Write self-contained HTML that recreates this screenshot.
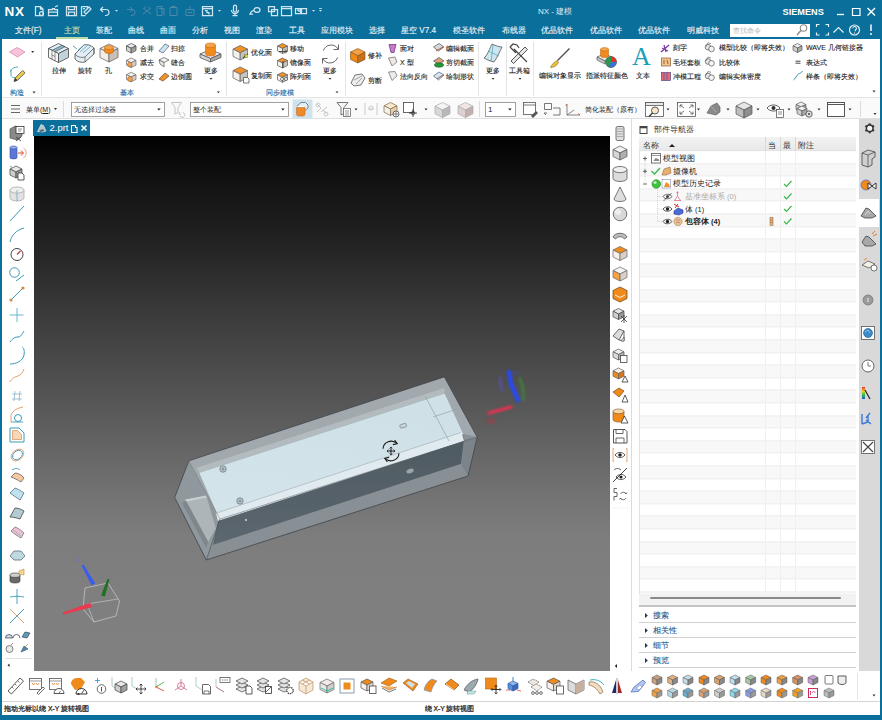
<!DOCTYPE html>
<html><head><meta charset="utf-8">
<style>
*{margin:0;padding:0;box-sizing:border-box}
html,body{width:882px;height:720px;overflow:hidden;background:#0b6f9c;font-family:"Liberation Sans",sans-serif;}
.a{position:absolute}
svg{overflow:visible}
#title{left:0;top:0;width:882px;height:39px;background:#0b6f9c;color:#fff}
.tab{position:absolute;top:24.8px;font-size:8.2px;color:#e6eef3;-webkit-text-stroke:0.15px currentColor;white-space:nowrap;line-height:12px}
#ribbon{left:2px;top:39px;width:878px;height:59px;background:#fff;border-bottom:1px solid #e3e3e3}
.rl{position:absolute;font-size:7px;color:#1c1c1c;-webkit-text-stroke:0.12px #1c1c1c;white-space:nowrap;line-height:9px}
.gl{position:absolute;font-size:7px;color:#2f6fa6;-webkit-text-stroke:0.15px #2f6fa6;white-space:nowrap;line-height:9px;top:88px}
.sep{position:absolute;width:1px;background:#e4e4e4}
#tbar{left:2px;top:98px;width:878px;height:21px;background:#fafafa;border-bottom:1px solid #e0e0e0}
#main{left:2px;top:119px;width:878px;height:552px;background:#fff}
#gfx{left:34px;top:136px;width:576px;height:535px;background:linear-gradient(#000 0%,#111 8%,#242424 21%,#3c3c3c 34%,#717171 66%,#7d7d7d 75%,#7f7f7f 85%,#808080 100%);overflow:hidden}
#gtab{left:33px;top:120px;width:57px;height:16px;background:#0b6f9c;color:#fff;font-size:10px}
#rcol{left:610px;top:119px;width:22px;height:552px;background:#fff;border-right:1px solid #dadada}
#nav{left:632px;top:119px;width:226px;height:552px;background:#fff}
#res{left:858.5px;top:119px;width:21px;height:552px;background:#d9d9d9}
#btbar{left:2px;top:671px;width:878px;height:30px;background:#fff}
#status{left:2px;top:701px;width:878px;height:14px;background:#fff;border-top:1px solid #d4d4d4;font-size:7.5px;color:#222}
</style></head><body>
<div id="title" class="a">
  <div class="a" style="left:4.5px;top:4px;font-size:13.5px;font-weight:bold;letter-spacing:0.8px;color:#fff">NX</div>
  <svg class="a" style="left:0;top:0" width="340" height="22" fill="none" stroke="#cde6f2" stroke-width="1.25">
    <!-- new -->
    <path d="M35.5 6.5h5l2.5 2.5v6.5h-7.5z M40.5 6.5v2.5h2.5"/><circle cx="41.5" cy="13.5" r="2"/>
    <!-- open -->
    <path d="M48.5 9.5h4v-1h2v1h3v6h-9z M48.5 12h9 M55 7l3-1.5"/>
    <!-- save -->
    <path d="M66.5 6.5h10v9h-10z M68.5 6.5v3h6v-3 M68.5 15.5v-3.5h6v3.5"/>
    <!-- save as -->
    <path d="M81.5 6.5h6v3 M81.5 6.5v9h4 M83 8.5h2 M84 12l5-5 2 2-5 5z"/>
    <!-- undo -->
    <path d="M101 9.5h5a3 3 0 0 1 0 6h-1 M103 7l-2.5 2.5 2.5 2.5" stroke-width="1.2"/>
    <path d="M115 10h3l-1.5 1.8z" fill="#cde4ee" stroke="none"/>
    <g stroke="#4d8aa8" stroke-width="1">
      <path d="M127 9.5h5a3 3 0 0 1 0 6h-1 M130 7l2.5 2.5-2.5 2.5"/>
      <path d="M143 8l8 6 M143 14l8-6 M145 6.5v2 M149 6.5v2"/>
      <path d="M157 6.5h5v9h-5z M159 8.5h5v7"/>
      <path d="M170 7.5h7v8h-7z M172 7.5v-1h3v1"/>
      <path d="M186 9.5h8v6h-8z M190 6v3 M188 12.5h4"/>
    </g>
    <path d="M202.5 6.5h10v9h-10z M202.5 8.5h10 M205 10.5h2v2h2v2" />
    <path d="M218 10h3l-1.5 1.8z" fill="#cde4ee" stroke="none"/>
    <!-- mic -->
    <path d="M233.5 6.5a1.5 1.5 0 0 1 3 0v4a1.5 1.5 0 0 1-3 0z M231.5 10a3.5 3.5 0 0 0 7 0 M235 13.5v2 M232.5 15.5h5"/>
    <!-- link -->
    <path d="M251 12l3-2 M254 10a2.5 2 0 0 1 6 0a2.5 2 0 0 1-6 0z M251 12l-1 2h3" />
    <!-- windows -->
    <path d="M268.5 6.5h6v5h-6z M271.5 9.5h6v6h-6z"/>
    <path d="M281.5 6.5h10v9h-10z M281.5 8.5h10"/>
    <path d="M295.5 8.5h5v5h-5z M301.5 8.5h5v5h-5z M297 10h2v2"/>
    <path d="M312 10h3l-1.5 1.8z M319 10h3l-1.5 1.8z" fill="#cde4ee" stroke="none"/>
    <path d="M319 8.5h3" stroke-width="0.8"/>
  </svg>
  <div class="a" style="left:538px;top:5.5px;font-size:8px;color:#e3ecf1;white-space:nowrap">NX - 建模</div>
  <div class="a" style="left:782.5px;top:6.8px;font-size:9.2px;font-weight:bold;letter-spacing:0px;color:#fff">SIEMENS</div>
  <svg class="a" style="left:830px;top:0" width="52" height="22" fill="none" stroke="#fff" stroke-width="1.3">
    <path d="M7 14.5h7"/>
    <path d="M22.5 8.5h7.5v7h-7.5z" stroke-width="1.2"/>
    <path d="M37.5 8l7.5 7.5 M45 8l-7.5 7.5" stroke-width="1.4"/>
  </svg>
  <div class="tab" style="left:15px">文件(F)</div>
  <div class="tab" style="left:64px;color:#c6e2a8">主页</div>
  <div class="a" style="left:56px;top:36.8px;width:32px;height:1.8px;background:#b4dca4"></div>
  <div class="tab" style="left:96px">装配</div>
  <div class="tab" style="left:128px">曲线</div>
  <div class="tab" style="left:160px">曲面</div>
  <div class="tab" style="left:192px">分析</div>
  <div class="tab" style="left:224px">视图</div>
  <div class="tab" style="left:256px">渲染</div>
  <div class="tab" style="left:289px">工具</div>
  <div class="tab" style="left:321px">应用模块</div>
  <div class="tab" style="left:369px">选择</div>
  <div class="tab" style="left:401px">星空 V7.4</div>
  <div class="tab" style="left:453px">模圣软件</div>
  <div class="tab" style="left:502px">布线器</div>
  <div class="tab" style="left:541px">优品软件</div>
  <div class="tab" style="left:590px">优品软件</div>
  <div class="tab" style="left:638px">优品软件</div>
  <div class="tab" style="left:687px">明威科技</div>
  <div class="a" style="left:730px;top:24px;width:80px;height:13px;background:#fff;"></div>
  <div class="a" style="left:733px;top:25.5px;font-size:7px;color:#b4b4b4;white-space:nowrap">查找命令</div>
  <svg class="a" style="left:730px;top:22px" width="152" height="17" fill="none">
    <circle cx="73.5" cy="6" r="3.2" stroke="#8a8a8a" stroke-width="1.1"/>
    <path d="M71 8.5l-4 4.5" stroke="#8a8a8a" stroke-width="1.4"/>
    <g stroke="#e9f2f6" stroke-width="1.2">
      <path d="M86.5 5v-2.5h3 M95.5 2.5h3v2.5 M98.5 10.5v2.5h-3 M89.5 13h-3v-2.5"/>
      <path d="M103.5 10.5l5-5 5 5"/>
      <circle cx="124.5" cy="8" r="5"/>
      <path d="M122.8 6.3a1.8 1.8 0 1 1 2.5 1.7v1.3 M124.5 10.5v1" stroke-width="1.1"/>
      <path d="M141 2.5v6.5 M141 11v2" stroke-width="1.6"/>
    </g>
  </svg>
</div>

<div id="ribbon" class="a"></div>
<svg class="a" style="left:0;top:0" width="882" height="100"><polygon points="9.5,52 17,47.5 25,52 17.5,57" fill="#f6c3d8" stroke="#d88aae" stroke-width="0.8" stroke-linejoin="round" /><path d="M31.2 51.1 h3 l-1.5 1.8 z" fill="#333"/><path d="M18 67c-4 0-7 2-7.5 4.5 M11 69.5v7 M12 77c2 1 5 1 6-1" fill="none" stroke="#3aa0b8" stroke-width="0.9"/><path d="M14 81.5l1.2-3.5 7.5-7.5 2.3 2.3-7.5 7.5z" fill="#f2d04a" stroke="#444" stroke-width="0.8"/><path d="M14 81.5l1.2-3.5 2.3 2.3z" fill="#333"/><path d="M32.5 91.6 h3 l-1.5 1.8 z" fill="#333"/><polygon points="48.5,48.5 58.5,43.5 68.5,48.5 58.5,53.5" fill="#dff0f6" stroke="#4a4a4a" stroke-width="0.8" stroke-linejoin="round" /><polygon points="48.5,48.5 58.5,53.5 58.5,62.5 48.5,57.5" fill="#f2f6f8" stroke="#4a4a4a" stroke-width="0.8" stroke-linejoin="round" /><polygon points="58.5,53.5 68.5,48.5 68.5,57.5 58.5,62.5" fill="#c2d3da" stroke="#4a4a4a" stroke-width="0.8" stroke-linejoin="round" /><polygon points="52,50.3 62,45.3 65,46.8 55,51.8" fill="#8fb4c4" stroke="#4a4a4a" stroke-width="0.6" stroke-linejoin="round" /><polygon points="52,50.3 55,51.8 55,60.8 52,59.3" fill="#ffffff" stroke="#4a4a4a" stroke-width="0.6" stroke-linejoin="round" /><path d="M52 55l3 1.5" stroke="#4a4a4a" stroke-width="0.6"/><path d="M75 54l9-9c3-1 7 0 10 3v6l-9 8c-3 1-8 0-10-3z" fill="#e2eef3" stroke="#4a4a4a" stroke-width="0.8"/><path d="M75 54c2 3 6 4 10 3l9-9" fill="none" stroke="#4a4a4a" stroke-width="0.7"/><path d="M78 50l7-6 M80 52l8-7 M83 53l8-7" fill="none" stroke="#6aa8c0" stroke-width="0.8"/><path d="M85 57v5 M94 48v6" fill="none" stroke="#4a4a4a" stroke-width="0.6"/><path d="M73 46l4 3" stroke="#3a8aa8" stroke-width="0.8"/><polygon points="100,48.5 109,44 118,48.5 109,53" fill="#eaeaea" stroke="#5a5a5a" stroke-width="0.7" stroke-linejoin="round" /><polygon points="100,48.5 109,53 109,62 100,57.5" fill="#f2ede6" stroke="#5a5a5a" stroke-width="0.7" stroke-linejoin="round" /><polygon points="109,53 118,48.5 118,57.5 109,62" fill="#c8c0b8" stroke="#5a5a5a" stroke-width="0.7" stroke-linejoin="round" /><path d="M104.5 47.5 v4 a4.5 2 0 0 0 9 0 v-4" fill="#f08a1a" stroke="#b86010" stroke-width="0.5"/><ellipse cx="109" cy="47.5" rx="4.5" ry="2" fill="#f6a64a" stroke="#b86010" stroke-width="0.5"/><polygon points="126.5,45.9 131.2,43.5 136,45.9 131.2,48.2" fill="#eeeeee" stroke="#444" stroke-width="0.7" stroke-linejoin="round" /><polygon points="126.5,45.9 131.2,48.2 131.2,53 126.5,50.6" fill="#d8d8d8" stroke="#444" stroke-width="0.7" stroke-linejoin="round" /><polygon points="131.2,48.2 136,45.9 136,50.6 131.2,53" fill="#a8a8a8" stroke="#444" stroke-width="0.7" stroke-linejoin="round" /><path d="M128 47l4.5 2.2 4-2" fill="none" stroke="#777" stroke-width="0.5"/><polygon points="126.5,60.4 131.2,58 136,60.4 131.2,62.8" fill="#f4f0ec" stroke="#666" stroke-width="0.7" stroke-linejoin="round" /><polygon points="126.5,60.4 131.2,62.8 131.2,67.5 126.5,65.1" fill="#f8f4f0" stroke="#666" stroke-width="0.7" stroke-linejoin="round" /><polygon points="131.2,62.8 136,60.4 136,65.1 131.2,67.5" fill="#d8d0c8" stroke="#666" stroke-width="0.7" stroke-linejoin="round" /><circle cx="129.8" cy="64.5" r="2.3" fill="#f0a050" stroke="#8a5a2a" stroke-width="0.5"/><polygon points="126.5,74.7 131.2,72.3 136,74.7 131.2,77" fill="#f4f0ec" stroke="#666" stroke-width="0.7" stroke-linejoin="round" /><polygon points="126.5,74.7 131.2,77 131.2,81.8 126.5,79.4" fill="#f8f4f0" stroke="#666" stroke-width="0.7" stroke-linejoin="round" /><polygon points="131.2,77 136,74.7 136,79.4 131.2,81.8" fill="#d8d0c8" stroke="#666" stroke-width="0.7" stroke-linejoin="round" /><path d="M130 76.5a2.4 2.4 0 0 1 0 5a2.4 2.4 0 0 1 0-5z" fill="#f0a050" stroke="#8a5a2a" stroke-width="0.5"/><polygon points="159,51 165,44 169,46 163,53" fill="#c9e6f1" stroke="#557" stroke-width="0.7" stroke-linejoin="round" /><polygon points="159,60 164,57.5 169,60 164,62.5" fill="#f4f4f4" stroke="#555" stroke-width="0.7" stroke-linejoin="round" /><polygon points="159,60 164,62.5 164,67 160,64" fill="#e8e8e8" stroke="#555" stroke-width="0.7" stroke-linejoin="round" /><polygon points="159,79 165,73 169,76 163,81" fill="#f0922a" stroke="#6a4a2a" stroke-width="0.7" stroke-linejoin="round" /><polygon points="200,54 210.5,49.5 221,54 210.5,58.5" fill="#f1e9f0" stroke="#555" stroke-width="0.8" stroke-linejoin="round" /><polygon points="200,54 210.5,58.5 210.5,62 200,57.5" fill="#d6d6d6" stroke="#555" stroke-width="0.8" stroke-linejoin="round" /><polygon points="210.5,58.5 221,54 221,57.5 210.5,62" fill="#a9a9a9" stroke="#555" stroke-width="0.8" stroke-linejoin="round" /><path d="M205.5 45.2 v8.6 a5 2.2 0 0 0 10 0 v-8.6" fill="#f08a1a" stroke="#b86010" stroke-width="0.5"/><ellipse cx="210.5" cy="45.2" rx="5" ry="2.2" fill="#f6a64a" stroke="#b86010" stroke-width="0.5"/><path d="M209.5 77.9 h3 l-1.5 1.8 z" fill="#333"/><path d="M216.9 91.5 h3 l-1.5 1.8 z" fill="#333"/><polygon points="233,49.1 240.2,45.5 247.5,49.1 240.2,52.8" fill="#f0922a" stroke="#5a5a5a" stroke-width="0.7" stroke-linejoin="round" /><polygon points="233,49.1 240.2,52.8 240.2,60 233,56.4" fill="#f6f0ea" stroke="#5a5a5a" stroke-width="0.7" stroke-linejoin="round" /><polygon points="240.2,52.8 247.5,49.1 247.5,56.4 240.2,60" fill="#c9c3bd" stroke="#5a5a5a" stroke-width="0.7" stroke-linejoin="round" /><path d="M243 58l5-4 M244.5 54.5l3 3" stroke="#4a5a20" stroke-width="1.2"/><circle cx="246.5" cy="56" r="1.6" fill="#c9d840"/><polygon points="233,70.6 240.2,67 247.5,70.6 240.2,74.2" fill="#f0922a" stroke="#5a5a5a" stroke-width="0.7" stroke-linejoin="round" /><polygon points="233,70.6 240.2,74.2 240.2,81.5 233,77.9" fill="#f6f0ea" stroke="#5a5a5a" stroke-width="0.7" stroke-linejoin="round" /><polygon points="240.2,74.2 247.5,70.6 247.5,77.9 240.2,81.5" fill="#c9c3bd" stroke="#5a5a5a" stroke-width="0.7" stroke-linejoin="round" /><path d="M243.5 77.5h4l1.5 1.5v4h-5.5z" fill="#fff" stroke="#444" stroke-width="0.7"/><polygon points="277.5,46 282.5,43.5 287.5,46 282.5,48.5" fill="#f0922a" stroke="#5a5a5a" stroke-width="0.7" stroke-linejoin="round" /><polygon points="277.5,46 282.5,48.5 282.5,53.5 277.5,51" fill="#f6f0ea" stroke="#5a5a5a" stroke-width="0.7" stroke-linejoin="round" /><polygon points="282.5,48.5 287.5,46 287.5,51 282.5,53.5" fill="#c9c3bd" stroke="#5a5a5a" stroke-width="0.7" stroke-linejoin="round" /><path d="M279 51.5h8 M285 49.5l2 2-2 2" fill="none" stroke="#333" stroke-width="0.8"/><polygon points="277.5,60.5 282.5,58 287.5,60.5 282.5,63" fill="#f0922a" stroke="#5a5a5a" stroke-width="0.7" stroke-linejoin="round" /><polygon points="277.5,60.5 282.5,63 282.5,68 277.5,65.5" fill="#f6f0ea" stroke="#5a5a5a" stroke-width="0.7" stroke-linejoin="round" /><polygon points="282.5,63 287.5,60.5 287.5,65.5 282.5,68" fill="#c9c3bd" stroke="#5a5a5a" stroke-width="0.7" stroke-linejoin="round" /><path d="M283 61v7" stroke="#333" stroke-width="0.8"/><polygon points="277.5,74.8 282.5,72.3 287.5,74.8 282.5,77.3" fill="#f0922a" stroke="#5a5a5a" stroke-width="0.7" stroke-linejoin="round" /><polygon points="277.5,74.8 282.5,77.3 282.5,82.3 277.5,79.8" fill="#f6f0ea" stroke="#5a5a5a" stroke-width="0.7" stroke-linejoin="round" /><polygon points="282.5,77.3 287.5,74.8 287.5,79.8 282.5,82.3" fill="#c9c3bd" stroke="#5a5a5a" stroke-width="0.7" stroke-linejoin="round" /><circle cx="282" cy="79" r="1.5" fill="#fff" stroke="#333" stroke-width="0.6"/><circle cx="286" cy="79" r="1.5" fill="#fff" stroke="#333" stroke-width="0.6"/><path d="M323.5 50.5a8 8 0 0 1 14.5 -1.5 M337.5 57.5a8 8 0 0 1 -14.5 1.5" fill="none" stroke="#555" stroke-width="0.9"/><path d="M338.5 44.5v5h-5 M322.5 63.5v-5h5" fill="none" stroke="#555" stroke-width="0.9"/><path d="M328.5 77.9 h3 l-1.5 1.8 z" fill="#333"/><path d="M335.5 91.5 h3 l-1.5 1.8 z" fill="#333"/><polygon points="350.5,52.1 357.8,48.5 365,52.1 357.8,55.8" fill="#f6a040" stroke="#8a5a2a" stroke-width="0.7" stroke-linejoin="round" /><polygon points="350.5,52.1 357.8,55.8 357.8,63 350.5,59.4" fill="#ef8a1a" stroke="#8a5a2a" stroke-width="0.7" stroke-linejoin="round" /><polygon points="357.8,55.8 365,52.1 365,59.4 357.8,63" fill="#c87018" stroke="#8a5a2a" stroke-width="0.7" stroke-linejoin="round" /><path d="M351 83l4-8 7-1 3 4-4 7-7 1z" fill="#ececec" stroke="#555" stroke-width="0.8"/><path d="M354 80l8-4 M356 84l6-6" stroke="#777" stroke-width="0.6"/><path d="M389 44.5h7l-2 8h-3z" fill="#c77ac8" stroke="#6a2a7a" stroke-width="0.7"/><polygon points="388.5,58 395,57 397,62 392,66" fill="#f0e8e0" stroke="#666" stroke-width="0.7" stroke-linejoin="round" /><polygon points="388.5,72 395,71.5 397,76 392,80.5" fill="#ececec" stroke="#666" stroke-width="0.7" stroke-linejoin="round" /><polygon points="433.5,47 439,43.5 444,47 438.5,51" fill="#d8d8d8" stroke="#555" stroke-width="0.7" stroke-linejoin="round" /><path d="M436 51l7-4" stroke="#a85a3a" stroke-width="1"/><polygon points="433.5,61 439,57.5 444,61 438.5,64" fill="#e0a080" stroke="#555" stroke-width="0.7" stroke-linejoin="round" /><ellipse cx="439" cy="65" rx="4.5" ry="2.2" fill="#1e9a3a" stroke="#2a5a2a" stroke-width="0.6"/><polygon points="433.5,76 439,72 444,75 438.5,80" fill="#cfe8f2" stroke="#557" stroke-width="0.7" stroke-linejoin="round" /><path d="M437 79l6-4" stroke="#a85a3a" stroke-width="1"/><path d="M484 58c3-2 6-10 8-14c4 2 8 3 10 3c-2 4-5 11-8 15c-3-1-7-2-10-4z" fill="#cde6ef" stroke="#555" stroke-width="0.8"/><path d="M488 51l11 5 M493 45l-2 17" stroke="#4aa0c0" stroke-width="0.7"/><path d="M491.5 77.9 h3 l-1.5 1.8 z" fill="#333"/><path d="M511 61l14-14 2.5 2.5-14 14z" fill="#e6e6e6" stroke="#444" stroke-width="0.9"/><path d="M510 47l6 6 M527 62l-13-13 M510 47l3-3 4 1 2 3" fill="none" stroke="#444" stroke-width="1.2"/><path d="M518.5 77.9 h3 l-1.5 1.8 z" fill="#333"/><path d="M569.5 48.5l-12 12" stroke="#555" stroke-width="1.4"/><path d="M557.5 60.5c-3 1-6 4-7 7c3 0 7-2 8-5z" fill="#e8c040" stroke="#8a7020" stroke-width="0.6"/><polygon points="597,57 604,54 612,57 605,61" fill="#eee" stroke="#555" stroke-width="0.7" stroke-linejoin="round" /><polygon points="597,57 605,61 605,64 597,60" fill="#ccc" stroke="#555" stroke-width="0.7" stroke-linejoin="round" /><path d="M600.5 49.3 v6.5 a4 1.8 0 0 0 8 0 v-6.5" fill="#f08a1a" stroke="#b86010" stroke-width="0.5"/><ellipse cx="604.5" cy="49.3" rx="4" ry="1.8" fill="#f6a64a" stroke="#b86010" stroke-width="0.5"/><circle cx="611" cy="62" r="5.5" fill="#2a9a4a" stroke="#444" stroke-width="0.6"/><path d="M611 62v-5.5a5.5 5.5 0 0 1 5.5 5.5z" fill="#e03030"/><path d="M611 62h5.5a5.5 5.5 0 0 1-8 4.8z" fill="#3a70d0"/><path d="M661 52l8-7 M662 48l6 3 M664 45l2 7" stroke="#7a3aa8" stroke-width="1.3"/><rect x="661.5" y="58" width="9" height="8" fill="#f4c48a" stroke="#8a5a3a" stroke-width="0.7"/><path d="M664 60v4 M667 60l1 4" stroke="#6a3a1a" stroke-width="0.7"/><rect x="661.5" y="72.5" width="9" height="8" fill="#e86a6a" stroke="#4a4a8a" stroke-width="0.7"/><path d="M664 73v7 M667 73v7" stroke="#5a5ac0" stroke-width="0.9"/><circle cx="708" cy="47.2" r="2.8" fill="#e6e6e6" stroke="#555" stroke-width="0.7"/><circle cx="711.5" cy="49" r="2.8" fill="#f4f4f4" stroke="#555" stroke-width="0.7"/><path d="M706 46.7 l2-4 3 1" fill="none" stroke="#555" stroke-width="0.6"/><circle cx="708" cy="61.5" r="2.8" fill="#e6e6e6" stroke="#555" stroke-width="0.7"/><circle cx="711.5" cy="63.3" r="2.8" fill="#f4f4f4" stroke="#555" stroke-width="0.7"/><path d="M706 61 l2-4 3 1" fill="none" stroke="#555" stroke-width="0.6"/><circle cx="708" cy="75.9" r="2.8" fill="#e6e6e6" stroke="#555" stroke-width="0.7"/><circle cx="711.5" cy="77.7" r="2.8" fill="#f4f4f4" stroke="#555" stroke-width="0.7"/><path d="M706 75.4 l2-4 3 1" fill="none" stroke="#555" stroke-width="0.6"/><polygon points="793,45.8 797.5,43.5 802,45.8 797.5,48" fill="#eeeeee" stroke="#5a5a5a" stroke-width="0.7" stroke-linejoin="round" /><polygon points="793,45.8 797.5,48 797.5,52.5 793,50.2" fill="#d2d2d2" stroke="#5a5a5a" stroke-width="0.7" stroke-linejoin="round" /><polygon points="797.5,48 802,45.8 802,50.2 797.5,52.5" fill="#a9a9a9" stroke="#5a5a5a" stroke-width="0.7" stroke-linejoin="round" /><path d="M795.5 61.2h5 M795.5 63.2h5" stroke="#333" stroke-width="0.9"/><path d="M793.5 80c2-1 3-5 5-6s3-1 4-3" fill="none" stroke="#2a90b0" stroke-width="0.9"/><path d="M872.5 90.6 h3 l-1.5 1.8 z" fill="#333"/></svg><div class="sep" style="left:41px;top:42px;height:54px"></div><div class="sep" style="left:226px;top:42px;height:54px"></div><div class="sep" style="left:344.5px;top:42px;height:54px"></div><div class="sep" style="left:478.3px;top:42px;height:54px"></div><div class="sep" style="left:505.5px;top:42px;height:54px"></div><div class="sep" style="left:533.4px;top:42px;height:54px"></div><div class="gl" style="left:9.5px;top:88px;top:88px">构造</div><div class="rl" style="left:52.4px;top:66.2px;">拉伸</div><div class="rl" style="left:77.5px;top:66.2px;">旋转</div><div class="rl" style="left:105.4px;top:66.2px;">孔</div><div class="rl" style="left:139.5px;top:43.7px;">合并</div><div class="rl" style="left:139.5px;top:58px;">减去</div><div class="rl" style="left:139.5px;top:72.3px;">求交</div><div class="rl" style="left:170.8px;top:43.7px;">扫掠</div><div class="rl" style="left:170.8px;top:58px;">缝合</div><div class="rl" style="left:170.8px;top:72.3px;">边倒圆</div><div class="rl" style="left:204px;top:66.1px;">更多</div><div class="gl" style="left:120.4px;top:87.9px;">基本</div><div class="rl" style="left:250.8px;top:48.2px;">优化面</div><div class="rl" style="left:250.8px;top:70.5px;">复制面</div><div class="rl" style="left:290.3px;top:43.7px;">移动</div><div class="rl" style="left:290.3px;top:58px;">镜像面</div><div class="rl" style="left:290.3px;top:72.3px;">阵列面</div><div class="rl" style="left:323px;top:66.1px;">更多</div><div class="gl" style="left:265.8px;top:87.9px;">同步建模</div><div class="rl" style="left:368.3px;top:51.2px;">修补</div><div class="rl" style="left:368.3px;top:76.4px;">剪断</div><div class="rl" style="left:400px;top:43.7px;">面对</div><div class="rl" style="left:400px;top:58px;">X 型</div><div class="rl" style="left:400px;top:72.3px;">法向反向</div><div class="rl" style="left:446.3px;top:43.7px;">编辑截面</div><div class="rl" style="left:446.3px;top:58px;">剪切截面</div><div class="rl" style="left:446.3px;top:72.3px;">绘制形状</div><div class="rl" style="left:485.8px;top:66.1px;">更多</div><div class="rl" style="left:509px;top:66.1px;">工具箱</div><div class="rl" style="left:538.7px;top:71.3px;">编辑对象显示</div><div class="rl" style="left:585.5px;top:71.3px;">指派特征颜色</div><div class="a" style="left:632px;top:44px;font-family:'Liberation Serif',serif;font-size:26px;line-height:26px;color:#1aa0b8">A</div><div class="rl" style="left:635.5px;top:71.3px;">文本</div><div class="rl" style="left:673px;top:43.2px;">刻字</div><div class="rl" style="left:673px;top:57.5px;">毛坯套板</div><div class="rl" style="left:673px;top:71.9px;">冲模工程</div><div class="rl" style="left:718.5px;top:43.2px;">模型比较（即将失效）</div><div class="rl" style="left:718.5px;top:57.5px;">比较体</div><div class="rl" style="left:718.5px;top:71.9px;">编辑实体密度</div><div class="rl" style="left:806px;top:43.2px;">WAVE 几何链接器</div><div class="rl" style="left:806px;top:57.5px;">表达式</div><div class="rl" style="left:806px;top:71.9px;">样条（即将失效）</div>
<div id="tbar" class="a"></div>
<svg class="a" style="left:0;top:0" width="882" height="120"><path d="M11 105.5h9 M11 109h9 M11 112.5h9" stroke="#555" stroke-width="0.9"/><path d="M54 108.1 h3 l-1.5 1.8 z" fill="#333"/><path d="M63.5 101v16" stroke="#ddd" stroke-width="1"/><rect x="71.5" y="102.5" width="93" height="14" fill="#fff" stroke="#8a8a8a" stroke-width="0.8"/><path d="M157.2 108.5 h3.5 l-1.8 2.1 z" fill="#222"/><path d="M171.5 102.5h10l-3.5 5v5l-3 1.5v-6.5z" fill="none" stroke="#b8b8b8" stroke-width="0.8"/><path d="M180 116a2.5 2.5 0 1 0 3-3.5 M180 112l-1 2 2 0.5" fill="none" stroke="#b8b8b8" stroke-width="0.8"/><rect x="190.5" y="102.5" width="98" height="14" fill="#fff" stroke="#8a8a8a" stroke-width="0.8"/><path d="M281.2 108.5 h3.5 l-1.8 2.1 z" fill="#222"/><rect x="292.5" y="99.5" width="20" height="19" fill="#cfe3ee" stroke="none"/><path d="M297 106l4-3.5h4.5l2.5 2.5v3l-3 2.5" fill="#e4eef4" stroke="#6a7a84" stroke-width="0.9"/><path d="M296.5 107.5h8.5v6.5c0 1.2-1 2-2 2h-4.5c-1.2 0-2-0.8-2-2z" fill="#ee8a2a" stroke="#b8601a" stroke-width="0.5"/><path d="M298 106.5h6" stroke="#fff" stroke-width="1"/><path d="M317 104l4 4 M321 108l-4 4 M323 110l4 4 M321 112l6 -5" fill="none" stroke="#c0c0c0" stroke-width="0.9"/><circle cx="318" cy="105" r="2" fill="none" stroke="#c0c0c0" stroke-width="0.8"/><circle cx="326" cy="114" r="2" fill="none" stroke="#c0c0c0" stroke-width="0.8"/><path d="M337 102.5h11l-4 5v6l-3 1.5v-7.5z" fill="#f4f4f4" stroke="#555" stroke-width="0.8"/><rect x="343.5" y="108.5" width="7" height="8" fill="#fff" stroke="#555" stroke-width="0.7"/><path d="M345 111h4 M345 113h4 M345 115h4" stroke="#555" stroke-width="0.6"/><path d="M354.5 108.6 h3 l-1.5 1.8 z" fill="#333"/><path d="M365 103v12 M377 103v12 M368 109h6" stroke="#c0c0c0" stroke-width="0.8" fill="none"/><circle cx="371" cy="108" r="2" fill="none" stroke="#c8c8c8"/><polygon points="384,105.8 390.5,102.5 397,105.8 390.5,109" fill="#fbe6c8" stroke="#7a6a5a" stroke-width="0.7" stroke-linejoin="round" /><polygon points="384,105.8 390.5,109 390.5,115.5 384,112.2" fill="#f6efe4" stroke="#7a6a5a" stroke-width="0.7" stroke-linejoin="round" /><polygon points="390.5,109 397,105.8 397,112.2 390.5,115.5" fill="#e8cfa6" stroke="#7a6a5a" stroke-width="0.7" stroke-linejoin="round" /><circle cx="396" cy="114" r="3" fill="#fff" stroke="#333" stroke-width="0.7"/><path d="M396 111.5v5 M393.5 114h5" stroke="#333" stroke-width="0.6"/><rect x="403.5" y="102.5" width="10" height="10" fill="#fff" stroke="#444" stroke-width="0.8"/><path d="M413 109v8 M409 113h8" stroke="#222" stroke-width="0.8"/><circle cx="413" cy="113" r="1.8" fill="none" stroke="#222" stroke-width="0.6"/><path d="M424.5 108.6 h3 l-1.5 1.8 z" fill="#333"/><polygon points="435,106.2 442.5,102.5 450,106.2 442.5,110" fill="#f4f4f4" stroke="#aaa" stroke-width="0.7" stroke-linejoin="round" /><polygon points="435,106.2 442.5,110 442.5,117.5 435,113.8" fill="#d8d8d8" stroke="#aaa" stroke-width="0.7" stroke-linejoin="round" /><polygon points="442.5,110 450,106.2 450,113.8 442.5,117.5" fill="#b8b8b8" stroke="#aaa" stroke-width="0.7" stroke-linejoin="round" /><polygon points="458,106.2 465.5,102.5 473,106.2 465.5,110" fill="#f1e6e6" stroke="#aaa" stroke-width="0.7" stroke-linejoin="round" /><polygon points="458,106.2 465.5,110 465.5,117.5 458,113.8" fill="#ddd0d0" stroke="#aaa" stroke-width="0.7" stroke-linejoin="round" /><polygon points="465.5,110 473,106.2 473,113.8 465.5,117.5" fill="#c0b0b0" stroke="#aaa" stroke-width="0.7" stroke-linejoin="round" /><path d="M479.5 101v16" stroke="#ddd" stroke-width="1"/><rect x="485.5" y="102.5" width="30" height="14" fill="#fff" stroke="#8a8a8a" stroke-width="0.8"/><path d="M508.2 108.5 h3.5 l-1.8 2.1 z" fill="#222"/><rect x="523.5" y="102.5" width="12" height="12" fill="#fff" stroke="#555" stroke-width="0.8"/><path d="M523.5 105h12" stroke="#555" stroke-width="0.8"/><path d="M531 116l5-5 2 2-5 5z" fill="#555"/><path d="M544.5 103.5h7v6h-7z M553 108h7v7h-7 M547 113h-3l2 2" fill="none" stroke="#555" stroke-width="0.8"/><path d="M567 104v11h13 M567 115l7-5" fill="none" stroke="#555" stroke-width="0.7"/><path d="M567 104l-1.5 2 M580 115l-2-1.5" stroke="#c04a2a" stroke-width="0.8"/><rect x="645.5" y="102.5" width="18" height="14" fill="#fff" stroke="#555" stroke-width="0.8"/><rect x="645.5" y="102.5" width="18" height="3" fill="#e8e8e8" stroke="#555" stroke-width="0.8"/><circle cx="655" cy="110.5" r="3.5" fill="#fbe7c7" stroke="#333" stroke-width="0.8"/><path d="M652.5 113l-3.5 3.5" stroke="#333" stroke-width="1.2"/><path d="M666.5 108.6 h3 l-1.5 1.8 z" fill="#333"/><rect x="677.5" y="102.5" width="18" height="14" fill="#fff" stroke="#555" stroke-width="0.8"/><path d="M680 105l4 3 M680 105v2.5 M680 105h2.5 M693 105l-4 3 M693 105v2.5 M693 105h-2.5 M680 114l4-3 M680 114v-2.5 M680 114h2.5 M693 114l-4-3 M693 114v-2.5 M693 114h-2.5" fill="none" stroke="#444" stroke-width="0.7"/><path d="M697 108.6 h3 l-1.5 1.8 z" fill="#333"/><path d="M707 113l4-7 6-3 3 4v5l-4 3z" fill="#8a8a8a" stroke="#555" stroke-width="0.6"/><path d="M711 106l5 6" stroke="#bbb" stroke-width="0.7"/><path d="M726.5 108.6 h3 l-1.5 1.8 z" fill="#333"/><polygon points="736,106 744,102 752,106 744,110" fill="#e6e6e6" stroke="#555" stroke-width="0.7" stroke-linejoin="round" /><polygon points="736,106 744,110 744,118 736,114" fill="#bdbdbd" stroke="#555" stroke-width="0.7" stroke-linejoin="round" /><polygon points="744,110 752,106 752,114 744,118" fill="#8e8e8e" stroke="#555" stroke-width="0.7" stroke-linejoin="round" /><path d="M756.5 108.6 h3 l-1.5 1.8 z" fill="#333"/><path d="M767 108c3-4 10-4 13 0c-3 4-10 4-13 0z" fill="#fff" stroke="#333" stroke-width="0.8"/><circle cx="773.5" cy="108" r="2" fill="#333"/><rect x="776.5" y="109.5" width="7" height="8" fill="#fff" stroke="#444" stroke-width="0.7"/><path d="M778 112h4 M778 114h4" stroke="#444" stroke-width="0.6"/><path d="M787.5 108.6 h3 l-1.5 1.8 z" fill="#333"/><polygon points="796,104.5 801,102 806,104.5 801,107" fill="#eeeeee" stroke="#5a5a5a" stroke-width="0.7" stroke-linejoin="round" /><polygon points="796,104.5 801,107 801,112 796,109.5" fill="#d2d2d2" stroke="#5a5a5a" stroke-width="0.7" stroke-linejoin="round" /><polygon points="801,107 806,104.5 806,109.5 801,112" fill="#a9a9a9" stroke="#5a5a5a" stroke-width="0.7" stroke-linejoin="round" /><polygon points="797,108.5 802,106 807,108.5 802,111" fill="#eeeeee" stroke="#5a5a5a" stroke-width="0.7" stroke-linejoin="round" /><polygon points="797,108.5 802,111 802,116 797,113.5" fill="#d2d2d2" stroke="#5a5a5a" stroke-width="0.7" stroke-linejoin="round" /><polygon points="802,111 807,108.5 807,113.5 802,116" fill="#a9a9a9" stroke="#5a5a5a" stroke-width="0.7" stroke-linejoin="round" /><circle cx="809" cy="114" r="3.2" fill="#ddd" stroke="#444" stroke-width="0.8"/><circle cx="809" cy="114" r="1" fill="#444"/><path d="M817.5 108.6 h3 l-1.5 1.8 z" fill="#333"/><rect x="827.5" y="102.5" width="17" height="14" fill="#fff" stroke="#444" stroke-width="0.9"/><path d="M827.5 104.5h17" stroke="#444" stroke-width="0.9"/><path d="M848.5 108.6 h3 l-1.5 1.8 z" fill="#333"/><path d="M860.5 101v16" stroke="#ddd" stroke-width="1"/><path d="M873.5 113.1 h3 l-1.5 1.8 z" fill="#333"/></svg><div class="a" style="left:26px;top:104.5px;font-size:7px;line-height:9px;color:#222;white-space:nowrap;">菜单(<u>M</u>)</div><div class="a" style="left:73.5px;top:105px;font-size:7px;line-height:9px;color:#222;white-space:nowrap;">无选择过滤器</div><div class="a" style="left:192.5px;top:105px;font-size:7px;line-height:9px;color:#222;white-space:nowrap;">整个装配</div><div class="a" style="left:488px;top:105px;font-size:7px;line-height:9px;color:#222;white-space:nowrap;font-size:8px">1</div><div class="a" style="left:585px;top:105px;font-size:7px;line-height:9px;color:#222;white-space:nowrap;">简化装配（原有）</div>
<div id="main" class="a"></div>
<div id="gfx" class="a"><svg class="a" style="left:0;top:0" width="576" height="535"><defs>
<linearGradient id="topf" x1="0" y1="1" x2="0.3" y2="0"><stop offset="0" stop-color="#d3e4ea"/><stop offset="1" stop-color="#cfe1e7"/></linearGradient>
<linearGradient id="frontf" x1="0" y1="0" x2="0" y2="1"><stop offset="0" stop-color="#4e5a61"/><stop offset="1" stop-color="#5c676f"/></linearGradient>
<filter id="bl" x="-50%" y="-50%" width="200%" height="200%"><feGaussianBlur stdDeviation="1"/></filter>
<filter id="bl2"><feGaussianBlur stdDeviation="0.35"/></filter>
</defs><g filter="url(#bl2)"><polygon points="154.8,324.8 410.3,240.9 443.2,301.2 434.0,340.0 172.3,424.0 140.7,361.5" fill="#8e969b" fill-opacity="0.6"/><polygon points="154.8,324.8 410.3,240.9 443.2,301.2 429.4,298.2 410.3,256.5 164.8,336.0 184.0,379.8 186.0,383.0" fill="#a2a9ae"/><polygon points="162.0,332.0 410.3,252.0 410.3,256.5 164.8,336.0" fill="#b3bbbf"/><polygon points="154.8,324.8 186.0,383.0 172.3,424.0 140.7,361.5" fill="#8f989d"/><polygon points="152.0,364.8 172.7,361.0 181.8,392.3 174.2,406.0" fill="#adb5b9"/><polygon points="151.0,363.5 172.0,359.5 172.9,361.5 152.2,365.5" fill="#c8d0d4"/><polygon points="152.0,364.8 174.2,406.0 172.3,412.0 148.0,367.0" fill="#7f878c"/><polygon points="164.8,336.0 410.3,256.5 429.4,298.2 184.0,379.8" fill="url(#topf)"/><polygon points="182.0,377.5 427.5,296.5 430.0,305.0 184.0,385.0" fill="#e1ebef"/><polygon points="184.0,385.0 430.0,305.0 427.0,328.0 179.0,409.0" fill="url(#frontf)"/><polygon points="179.0,409.0 427.0,328.0 434.0,340.0 172.3,424.0" fill="#899095"/><polygon points="430.0,303.5 443.2,301.2 434.0,340.0 427.0,328.0" fill="#7b8489"/><polygon points="429.4,298.2 443.2,301.2 430.0,303.5" fill="#8a9297"/><path d="M154.8 324.8 L410.3 240.9 L443.2 301.2 L434.0 340.0 L172.3 424.0 L140.7 361.5 L154.8 324.8" fill="none" stroke="#3d4247" stroke-width="0.8" /><path d="M186.0 383.0 L443.2 301.2" fill="none" stroke="#5a6166" stroke-width="0.5" /><path d="M186.0 383.0 L172.3 424.0" fill="none" stroke="#4a5055" stroke-width="0.6" /><path d="M154.8 324.8 L186.0 383.0" fill="none" stroke="#7a8287" stroke-width="0.5" /><path d="M165.0 336.5 L411.0 257.0" fill="none" stroke="#8d999f" stroke-width="0.6" /><path d="M181.0 377.5 L427.0 296.5" fill="none" stroke="#a0acb1" stroke-width="0.6" /><path d="M391.0 260.0 L415.0 305.0" fill="none" stroke="#8d999f" stroke-width="0.6" /><path d="M399.0 281.0 L423.0 273.0" fill="none" stroke="#8d999f" stroke-width="0.6" /><circle cx="189.0" cy="333.0" r="3.2" fill="#bcc7cc" stroke="#6e7a80" stroke-width="0.8"/><circle cx="189.0" cy="333.0" r="1.5" fill="#8b979d"/><circle cx="206.0" cy="365.0" r="3.2" fill="#bcc7cc" stroke="#6e7a80" stroke-width="0.8"/><circle cx="206.0" cy="365.0" r="1.5" fill="#8b979d"/><rect x="366.0" y="288.0" width="6.5" height="3.6" rx="1" fill="#c9d5da" stroke="#7a868c" stroke-width="0.7" transform="rotate(-17 369.0 290.0)"/><ellipse cx="376.0" cy="335.0" rx="3.8" ry="2.2" fill="#9aa4a9" transform="rotate(-20 376.0 335.0)"/><circle cx="212.0" cy="384.0" r="1.1" fill="#c8d0d4" /></g><g transform="translate(357.0 315.0) scale(1.45)" fill="none" stroke="#1a1a1a" stroke-width="0.75"><path d="M-5.5 -1.5a5.5 5.5 0 0 1 9.5 -3.5 M5.5 1.5a5.5 5.5 0 0 1 -9.5 3.5"/><path d="M2.5 -7.5l1.8 2.5-3 0.6 M-2.5 7.5l-1.8-2.5 3-0.6"/><path d="M-2.6 0h5.2 M0 -2.6v5.2" stroke-width="0.7"/><path d="M-1 -1.8l1-1 1 1 M-1 1.8l1 1 1-1 M-1.8 -1l-1 1 1 1 M1.8 -1l1 1-1 1" stroke-width="0.5"/></g><g filter="url(#bl)"><path d="M466.0 242.0 L467.5 254.0" fill="none" stroke="#5a50c8" stroke-width="3" stroke-linecap="round" opacity="0.55"/><path d="M475.0 236.0 L477.0 248.0 L484.0 264.0" fill="none" stroke="#2848f0" stroke-width="4.5" stroke-linecap="round"/><path d="M479.0 238.0 L484.0 236.0" fill="none" stroke="#4a48b8" stroke-width="2.5" opacity="0.5"/><path d="M486.0 243.0 L489.0 252.0 L489.5 263.0" fill="none" stroke="#3a8a3a" stroke-width="3" stroke-linecap="round" opacity="0.75"/><path d="M455.0 277.0 L477.0 271.0" fill="none" stroke="#e83050" stroke-width="3.2" stroke-linecap="round"/><ellipse cx="457.0" cy="285.0" rx="5" ry="3" fill="#b03040" opacity="0.45"/></g><g filter="url(#bl2)"><path d="M51.0 452.0 L74.0 447.0 L85.5 465.0 L82.0 480.0 L60.0 486.0 L49.0 473.0 L51.0 452.0" fill="none" stroke="#c4c4c4" stroke-width="0.8" /><path d="M53.0 468.0 L84.0 463.0" fill="none" stroke="#c4c4c4" stroke-width="0.7" /><path d="M53.0 468.0 L60.0 486.0" fill="none" stroke="#c4c4c4" stroke-width="0.7" /><polygon points="47.5,429.5 57.7,449.5 61.3,447.5 49.5,428.5" fill="#3a5cf0" opacity="1"/><polygon points="73.5,442.7 67.1,459.4 70.9,460.6 75.5,443.3" fill="#207020" opacity="1"/><polygon points="29.3,478.6 57.7,471.2 56.3,466.8 28.7,476.4" fill="#e83a50" opacity="1"/><text x="42.0" y="425.0" font-size="5" fill="#6a6ad0" font-family="Liberation Sans">Z</text></g></svg></div>
<div id="gtab" class="a"><svg class="a" style="left:0;top:0" width="57" height="16">
<path d="M4.5 11.5l3.5-7 2.5 1 2.5 5.5-3 1z" fill="#b8c4cc" stroke="#e4eaee" stroke-width="0.6"/><path d="M6 10.5l4-1.5 1.5 2-4 1z" fill="#5a6a74"/>
<path d="M38.5 5.5h4v2l1.5 0v5h-5.5z" fill="none" stroke="#fff" stroke-width="1.1"/>
<path d="M48.5 5.5l5 5 M53.5 5.5l-5 5" stroke="#fff" stroke-width="1.5"/>
</svg>
<div class="a" style="left:16.5px;top:2px;font-size:9.5px;line-height:11px;color:#fff">2.prt</div>
</div>
<svg class="a" style="left:0;top:0" width="40" height="720"><path d="M10 129l5-3 7 2v8l-5 4-7-2z" fill="#8a8a8a" stroke="#444" stroke-width="0.6"/><rect x="16" y="126.5" width="8" height="7" fill="#fff" stroke="#333" stroke-width="0.8"/><path d="M18 129h4 M18 131h3" stroke="#444" stroke-width="0.6"/><path d="M16 137l5 4 M21 137l-5 4" stroke="#333" stroke-width="0.8"/><path d="M10 147.5 v9.9 a3.5 1.5 0 0 0 7 0 v-9.9" fill="#5a78d8" stroke="#334a9a" stroke-width="0.6"/><ellipse cx="13.5" cy="147.5" rx="3.5" ry="1.5" fill="#9ab0f0" stroke="#334a9a" stroke-width="0.6"/><path d="M18 153h5 M21 150.5l2.5 2.5-2.5 2.5" fill="none" stroke="#d04a2a" stroke-width="1"/><path d="M23.5 148a6 6 0 0 1 0 10" fill="none" stroke="#e08a6a" stroke-width="0.8"/><polygon points="10,169 16,166 22,169 16,172" fill="#e8e8e8" stroke="#444" stroke-width="0.7" stroke-linejoin="round" /><polygon points="10,169 16,172 16,178 10,175" fill="#cfcfcf" stroke="#444" stroke-width="0.7" stroke-linejoin="round" /><polygon points="16,172 22,169 22,175 16,178" fill="#9a9a9a" stroke="#444" stroke-width="0.7" stroke-linejoin="round" /><path d="M18 173h4l2 2v5h-6z" fill="#fff" stroke="#333" stroke-width="0.8"/><path d="M10 166l2 1.5" stroke="#3a8aa8" stroke-width="0.8"/><path d="M10 190.1 v7.8 a7 3.1 0 0 0 14 0 v-7.8" fill="#e2e2e2" stroke="#aaa" stroke-width="0.8"/><ellipse cx="17" cy="190.1" rx="7" ry="3.1" fill="#efefef" stroke="#aaa" stroke-width="0.8"/><path d="M17 190v11" stroke="#6aaac8" stroke-width="0.8"/><path d="M10 221l14-15" stroke="#3a9ab8" stroke-width="1"/><path d="M10 242c1-6 6-12 14-14" fill="none" stroke="#3a9ab8" stroke-width="1"/><circle cx="17" cy="254.5" r="6" fill="none" stroke="#4a3a4a" stroke-width="1"/><path d="M17 254.5l3.5-3.5" stroke="#c03a3a" stroke-width="1.3"/><circle cx="14.5" cy="272.5" r="4.8" fill="none" stroke="#3a9ab8" stroke-width="1"/><path d="M16 281l8-6" stroke="#3a9ab8" stroke-width="1"/><path d="M11 300l12-12" stroke="#3a9ab8" stroke-width="1"/><circle cx="11" cy="300" r="1.6" fill="#d08a4a"/><circle cx="23" cy="288" r="1.6" fill="#d08a4a"/><path d="M9.5 315h14 M17 308v14" stroke="#5ab0c8" stroke-width="0.9"/><path d="M10 342c3-4 5-5 8-5s4-3 6-6" fill="none" stroke="#3a9ab8" stroke-width="1"/><path d="M10 364c6 0 13-3 14-9s-1-7-2-8" fill="none" stroke="#3a9ab8" stroke-width="1"/><path d="M10 382c2-4 5-5 8-6s5-4 6-7" fill="none" stroke="#e0a070" stroke-width="1"/><path d="M12 394h10 M12 399h10 M15 391l-1 10 M20 391l-1 10" stroke="#7aaac0" stroke-width="0.7"/><path d="M11 422v-7c2-5 7-7 12-8" fill="none" stroke="#e0a070" stroke-width="1"/><circle cx="18" cy="418" r="3.5" fill="none" stroke="#3a9ab8" stroke-width="1"/><path d="M11 422h12" stroke="#3a9ab8" stroke-width="0.9"/><path d="M10 428h9l5 5v9h-14z" fill="none" stroke="#3a9ab8" stroke-width="1"/><path d="M12.5 430.5h5l4 4v5h-9z" fill="#f6d8b8" stroke="#e0a070" stroke-width="0.9"/><ellipse cx="17.5" cy="455" rx="7" ry="5" transform="rotate(-40 17.5 455)" fill="none" stroke="#e0a070" stroke-width="0.9"/><ellipse cx="17.5" cy="455" rx="5.5" ry="4" transform="rotate(-40 17.5 455)" fill="none" stroke="#3a9ab8" stroke-width="0.9"/><path d="M11 477l4-4c3 0 7 2 9 5l-3 4c-3-2-7-4-10-5z" fill="#f4c8a0" stroke="#555" stroke-width="0.7"/><path d="M12 470c3-2 6-2 8 0" fill="none" stroke="#3a9ab8" stroke-width="0.9"/><path d="M10 493l5-5c3 1 6 3 9 5l-4 7c-3-2-6-4-10-7z" fill="#bfe2f0" stroke="#557080" stroke-width="0.8"/><path d="M10 517l5-9c3 0 6 1 9 3l-4 8c-3-1-7-2-10-2z" fill="#b4cad4" stroke="#444" stroke-width="0.8"/><path d="M11 531l4-4c3 1 6 3 9 6l-3 5c-3-2-7-4-10-7z" fill="#f0c0d0" stroke="#777" stroke-width="0.8"/><path d="M13 530l8 6" stroke="#9ab8c8" stroke-width="1"/><path d="M10 556l4-5 7 0 4 5-4 4-7 0z" fill="#c0d8e0" stroke="#557080" stroke-width="0.8"/><path d="M10 575.2 v5.6 a5 2.2 0 0 0 10 0 v-5.6" fill="#6a6a6a" stroke="#333" stroke-width="0.6"/><ellipse cx="15" cy="575.2" rx="5" ry="2.2" fill="#cfcfcf" stroke="#333" stroke-width="0.6"/><path d="M19 571l5-2v6l-5-1z" fill="#f4d890" stroke="#b89040" stroke-width="0.6"/><path d="M10 597c4-1 10-1 14 0 M17 589v15" fill="none" stroke="#3a9ab8" stroke-width="0.9"/><path d="M10 609l14 14" stroke="#e0a070" stroke-width="1"/><path d="M24 609l-14 14" stroke="#3a9ab8" stroke-width="1"/><path d="M5.5 638a3.5 3.5 0 0 1 7 0z" fill="#cfe0ea" stroke="#334" stroke-width="0.7"/><path d="M13 638a3.5 3.5 0 0 1 7 0" fill="none" stroke="#334" stroke-width="0.7"/><path d="M22 637l3-5 5 1-3 5z" fill="#5a9ab8" stroke="#334" stroke-width="0.6"/><circle cx="9.5" cy="649" r="3.5" fill="#e8e8e8" stroke="#555" stroke-width="0.7"/><path d="M11 645l2-2" stroke="#c04a8a" stroke-width="0.8"/><path d="M21 652l3-6 4 3z" fill="#4a8ab8" stroke="#334" stroke-width="0.5"/><path d="M25 647l3-3" stroke="#d8b040" stroke-width="1"/><path d="M5 658.5h27" stroke="#e2e2e2" stroke-width="1"/><path d="M9.5 663.5v3.5l-2-1.75z" fill="#222"/></svg>
<div id="rcol" class="a"></div>
<svg class="a" style="left:0;top:0" width="882" height="720"><rect x="616" y="126.5" width="8" height="14" rx="1.5" fill="#e0e0e0" stroke="#555" stroke-width="0.8"/><path d="M617 129h6 M617 131.5h6 M617 134h6 M617 136.5h6" stroke="#888" stroke-width="0.6"/><polygon points="613,149.5 620,146 627,149.5 620,153" fill="#f2f2f2" stroke="#555" stroke-width="0.7" stroke-linejoin="round" /><polygon points="613,149.5 620,153 620,160 613,156.5" fill="#d6d6d6" stroke="#555" stroke-width="0.7" stroke-linejoin="round" /><polygon points="620,153 627,149.5 627,156.5 620,160" fill="#b0b0b0" stroke="#555" stroke-width="0.7" stroke-linejoin="round" /><path d="M613 169.6 v8.8 a7 3.1 0 0 0 14 0 v-8.8" fill="#dcdcdc" stroke="#555" stroke-width="0.8"/><ellipse cx="620" cy="169.6" rx="7" ry="3.1" fill="#f0f0f0" stroke="#555" stroke-width="0.8"/><path d="M620 187l-6 12a6 2.5 0 0 0 12 0z" fill="#dedede" stroke="#555" stroke-width="0.8"/><circle cx="620" cy="214" r="6.8" fill="#d8d8d8" stroke="#555" stroke-width="0.8"/><circle cx="618" cy="212" r="3" fill="#eee"/><path d="M613 237c2-5 12-5 14 0l-2.5 2c-2-3-7-3-9 0z" fill="#bdbdbd" stroke="#555" stroke-width="0.8"/><polygon points="613,250 620,246.5 627,250 620,253.5" fill="#f08a1a" stroke="#666" stroke-width="0.7" stroke-linejoin="round" /><polygon points="613,250 620,253.5 620,260.5 613,257" fill="#f6f0ea" stroke="#666" stroke-width="0.7" stroke-linejoin="round" /><polygon points="620,253.5 627,250 627,257 620,260.5" fill="#d7d0c8" stroke="#666" stroke-width="0.7" stroke-linejoin="round" /><polygon points="613,270.5 620,267 627,270.5 620,274" fill="#f4f4f4" stroke="#666" stroke-width="0.7" stroke-linejoin="round" /><polygon points="613,270.5 620,274 620,281 613,277.5" fill="#f6a040" stroke="#666" stroke-width="0.7" stroke-linejoin="round" /><polygon points="620,274 627,270.5 627,277.5 620,281" fill="#d8d0c8" stroke="#666" stroke-width="0.7" stroke-linejoin="round" /><path d="M620 287l7 3.5v8l-7 3.5-7-3.5v-8z" fill="#f08a1a" stroke="#7a4a1a" stroke-width="0.8"/><path d="M615 295l5 2.5 5-2.5" fill="none" stroke="#fff" stroke-width="0.9"/><polygon points="613,311.2 618.5,308.5 624,311.2 618.5,314" fill="#e6e6e6" stroke="#444" stroke-width="0.7" stroke-linejoin="round" /><polygon points="613,311.2 618.5,314 618.5,319.5 613,316.8" fill="#cfcfcf" stroke="#444" stroke-width="0.7" stroke-linejoin="round" /><polygon points="618.5,314 624,311.2 624,316.8 618.5,319.5" fill="#9a9a9a" stroke="#444" stroke-width="0.7" stroke-linejoin="round" /><path d="M621 316l6 6 M627 316l-6 6 M624 315v8" stroke="#333" stroke-width="0.8"/><path d="M613 336l6-7 5 2-5 9z" fill="#dcdcdc" stroke="#444" stroke-width="0.8"/><path d="M624 331v10l-5-1" fill="none" stroke="#444" stroke-width="0.8"/><path d="M621 341l3-4v4z" fill="#fff" stroke="#333" stroke-width="0.6"/><polygon points="613,351.8 618.5,349 624,351.8 618.5,354.5" fill="#eee" stroke="#555" stroke-width="0.7" stroke-linejoin="round" /><polygon points="613,351.8 618.5,354.5 618.5,360 613,357.2" fill="#dadada" stroke="#555" stroke-width="0.7" stroke-linejoin="round" /><polygon points="618.5,354.5 624,351.8 624,357.2 618.5,360" fill="#b6b6b6" stroke="#555" stroke-width="0.7" stroke-linejoin="round" /><rect x="620.5" y="355.5" width="6.5" height="7" fill="#fff" stroke="#444" stroke-width="0.8"/><polygon points="613,370.8 618.5,368 624,370.8 618.5,373.5" fill="#f6f0ea" stroke="#666" stroke-width="0.7" stroke-linejoin="round" /><polygon points="613,370.8 618.5,373.5 618.5,379 613,376.2" fill="#f08a1a" stroke="#666" stroke-width="0.7" stroke-linejoin="round" /><polygon points="618.5,373.5 624,370.8 624,376.2 618.5,379" fill="#d8761a" stroke="#666" stroke-width="0.7" stroke-linejoin="round" /><path d="M622 382l3-6 3 6z" fill="#fff" stroke="#333" stroke-width="0.8"/><path d="M613 392l6-4 5 3-5 6z" fill="#f08a1a" stroke="#7a4a1a" stroke-width="0.7"/><path d="M622 402l3-7 3 7z" fill="#fff" stroke="#333" stroke-width="0.8"/><path d="M613 411.4 v8.2 a5.5 2.4 0 0 0 11 0 v-8.2" fill="#f08a1a" stroke="#7a4a1a" stroke-width="0.6"/><ellipse cx="618.5" cy="411.4" rx="5.5" ry="2.4" fill="#f6d8a8" stroke="#7a4a1a" stroke-width="0.6"/><path d="M621 423l3.5-7 3.5 7z" fill="#fff" stroke="#333" stroke-width="0.8"/><path d="M613.5 429.5h11.5l2 2v11.5h-13.5z" fill="#fff" stroke="#444" stroke-width="0.9"/><path d="M616 429.5v4h7v-4 M616 443v-5h8v5" fill="none" stroke="#444" stroke-width="0.8"/><path d="M614 448.5h-1v13h1 M626 448.5h1v13h-1" fill="none" stroke="#e0a070" stroke-width="0.9"/><path d="M615 455c3-3.5 7-3.5 10 0c-3 3.5-7 3.5-10 0z" fill="#fff" stroke="#333" stroke-width="0.8"/><circle cx="620" cy="455" r="1.8" fill="#222"/><path d="M614 470c2-2 5-2 7 0 M616 477c3-3.5 7-3.5 10 0c-3 3.5-7 3.5-10 0z" fill="none" stroke="#333" stroke-width="0.8"/><circle cx="621" cy="477" r="1.6" fill="#222"/><path d="M613 482l14-14" stroke="#333" stroke-width="0.9"/><path d="M617 488.5h-3v4h3v4h-3v4" fill="none" stroke="#555" stroke-width="0.9"/><path d="M620.5 494a3 3 0 0 1 5.5 0 M626 498a3 3 0 0 1-5.5 0 M625 492.5l1 1.5 1-1.5 M621.5 499.5l-1-1.5-1 1.5" fill="none" stroke="#555" stroke-width="0.8"/><path d="M617 664v4l-2.2-2z" fill="#222"/><path d="M613 508h15" stroke="#e4e4e4" stroke-width="0.8" stroke-dasharray="1 1"/></svg>
<div id="nav" class="a"></div>
<div class="a" style="left:631px;top:119px;width:1px;height:552px;background:#d6dde2"></div><div class="a" style="left:639px;top:137px;width:217px;height:468px;border-left:1px solid #e2e2e2;background:repeating-linear-gradient(#fff 0px,#fff 11.6px,#ececec 11.6px,#ececec 12.6px,#f8f8f8 12.6px,#f8f8f8 24.2px,#ececec 24.2px,#ececec 25.2px);background-position:0 14.4px;background-repeat:repeat-y"></div><div class="a" style="left:639px;top:137px;width:217px;height:14.4px;background:linear-gradient(#f3f3f3,#e9e9e9);border-bottom:1px solid #e4e4e4"></div><div class="a" style="left:765px;top:137px;width:1px;height:14.4px;background:#d8d8d8"></div><div class="a" style="left:765px;top:151.4px;width:1px;height:442px;background:#f0f0f0"></div><div class="a" style="left:780px;top:137px;width:1px;height:14.4px;background:#d8d8d8"></div><div class="a" style="left:780px;top:151.4px;width:1px;height:442px;background:#f0f0f0"></div><div class="a" style="left:795px;top:137px;width:1px;height:14.4px;background:#d8d8d8"></div><div class="a" style="left:795px;top:151.4px;width:1px;height:442px;background:#f0f0f0"></div><div class="a" style="left:639px;top:593.5px;width:217px;height:11px;background:#f2f2f2"></div><div class="a" style="left:650px;top:596.5px;width:191px;height:2px;background:#8a8a8a;border-radius:1px"></div><div class="a" style="left:639px;top:604.5px;width:217px;height:2px;background:#c4c4c4"></div><div class="a" style="left:639px;top:622px;width:217px;height:1px;background:#d0d0d0"></div><div class="a" style="left:639px;top:636.7px;width:217px;height:1px;background:#d0d0d0"></div><div class="a" style="left:639px;top:651.6px;width:217px;height:1px;background:#d0d0d0"></div><div class="a" style="left:639px;top:667px;width:217px;height:1px;background:#d0d0d0"></div><svg class="a" style="left:0;top:0" width="882" height="720"><rect x="640" y="126.5" width="7" height="7" fill="#fff" stroke="#444" stroke-width="1"/><path d="M640 127.5h7" stroke="#444" stroke-width="1.6"/><path d="M669 147h6l-3-3z" fill="#222"/><path d="M645 160v24 M657.5 190v32 M657.5 196.5h5 M657.5 209h5 M657.5 221.5h5" stroke="#bbb" stroke-width="0.6" stroke-dasharray="1 1" fill="none"/><path d="M643 158.5h4 M645 156.5v4 M643 171.3h4 M645 169.3v4 M643 184h4" stroke="#444" stroke-width="0.8"/><rect x="651.5" y="153.5" width="9" height="9.5" fill="#fff" stroke="#555" stroke-width="0.8"/><path d="M651.5 155.5h9" stroke="#555" stroke-width="0.6"/><path d="M653.5 161l2-3 3 1 1 2z" fill="#888"/><path d="M651.5 171l3 3 5.5-6" fill="none" stroke="#3ab84a" stroke-width="1.3"/><path d="M662 175l2-6 6-2 1 6-5 2z" fill="#e8b070" stroke="#9a6a3a" stroke-width="0.6"/><circle cx="656.3" cy="184" r="4.3" fill="#3cc43c" stroke="#2a7a2a" stroke-width="0.6"/><circle cx="655" cy="182.5" r="1.6" fill="#b8f0b8"/><rect x="662" y="179.5" width="8.5" height="8.5" fill="#fff" stroke="#8a8aa8" stroke-width="0.6"/><path d="M664 187l2-5 3 2 1 3z" fill="#f0922a"/><path d="M663 196.5c2.5-3 7-3 9 0c-2.5 3-7 3-9 0z" fill="#fff" stroke="#444" stroke-width="0.8"/><circle cx="667.5" cy="196.5" r="1.5" fill="#444"/><path d="M663.5 201l8-8" stroke="#444" stroke-width="0.7"/><path d="M677.5 192v4 M674 200.5h7 M677.5 196l-3 4.5 M677.5 196l3 4.5" stroke="#e07090" stroke-width="0.8" fill="none"/><circle cx="677.5" cy="192.5" r="1" fill="#e07090"/><path d="M663 209c2.5-3 7-3 9 0c-2.5 3-7 3-9 0z" fill="#fff" stroke="#333" stroke-width="0.8"/><circle cx="667.5" cy="209" r="1.7" fill="#222"/><path d="M674 211l4-3 5 2v3l-4 2-5-1z" fill="#4a6ad8" stroke="#2a3a8a" stroke-width="0.6"/><path d="M674 204l5 3 M678 204l-3 4" stroke="#d02a2a" stroke-width="1"/><path d="M663 221.5c2.5-3 7-3 9 0c-2.5 3-7 3-9 0z" fill="#fff" stroke="#333" stroke-width="0.8"/><circle cx="667.5" cy="221.5" r="1.7" fill="#222"/><circle cx="678" cy="221.5" r="4.2" fill="#e8c098" stroke="#b8865a" stroke-width="0.6"/><path d="M676 220h4 M676 222.5h4" stroke="#a8764a" stroke-width="0.6"/><path d="M784 184 l2.5 2.5 5-5.5" fill="none" stroke="#3ab84a" stroke-width="1.2"/><path d="M784 196.5 l2.5 2.5 5-5.5" fill="none" stroke="#3ab84a" stroke-width="1.2"/><path d="M784 209 l2.5 2.5 5-5.5" fill="none" stroke="#3ab84a" stroke-width="1.2"/><path d="M784 221.5 l2.5 2.5 5-5.5" fill="none" stroke="#3ab84a" stroke-width="1.2"/><rect x="770" y="217.5" width="3" height="8" fill="#e8b880" stroke="#8a5a3a" stroke-width="0.5"/><path d="M770 220h3 M770 222.5h3" stroke="#8a5a3a" stroke-width="0.5"/><path d="M645 612.9 v5 l2.8 -2.5z" fill="#1a3a5a"/><path d="M645 628 v5 l2.8 -2.5z" fill="#1a3a5a"/><path d="M645 642.9 v5 l2.8 -2.5z" fill="#1a3a5a"/><path d="M645 658.1 v5 l2.8 -2.5z" fill="#1a3a5a"/></svg><div class="a" style="left:654px;top:125px;font-size:7.5px;line-height:9px;color:#222;white-space:nowrap;color:#333">部件导航器</div><div class="a" style="left:642.7px;top:141px;font-size:7.5px;line-height:9px;color:#222;white-space:nowrap;color:#333">名称</div><div class="a" style="left:767.5px;top:141px;font-size:7.5px;line-height:9px;color:#222;white-space:nowrap;color:#333">当</div><div class="a" style="left:782.5px;top:141px;font-size:7.5px;line-height:9px;color:#222;white-space:nowrap;color:#333">最</div><div class="a" style="left:797.5px;top:141px;font-size:7.5px;line-height:9px;color:#222;white-space:nowrap;color:#333">附注</div><div class="a" style="left:663px;top:153.7px;font-size:7.5px;line-height:9px;color:#222;white-space:nowrap;">模型视图</div><div class="a" style="left:673.3px;top:166.8px;font-size:7.5px;line-height:9px;color:#222;white-space:nowrap;">摄像机</div><div class="a" style="left:673.3px;top:179.2px;font-size:7.5px;line-height:9px;color:#222;white-space:nowrap;">模型历史记录</div><div class="a" style="left:685px;top:192.2px;font-size:7.5px;line-height:9px;color:#222;white-space:nowrap;color:#aaa">基准坐标系 (0)</div><div class="a" style="left:685px;top:204.5px;font-size:7.5px;line-height:9px;color:#222;white-space:nowrap;">体 (1)</div><div class="a" style="left:685px;top:216.8px;font-size:7.5px;line-height:9px;color:#222;white-space:nowrap;font-weight:bold">包容体 (4)</div><div class="a" style="left:652.7px;top:610.9px;font-size:8px;line-height:9px;color:#1f5a8c;-webkit-text-stroke:0.1px #1f5a8c;white-space:nowrap">搜索</div><div class="a" style="left:652.7px;top:626px;font-size:8px;line-height:9px;color:#1f5a8c;-webkit-text-stroke:0.1px #1f5a8c;white-space:nowrap">相关性</div><div class="a" style="left:652.7px;top:640.9px;font-size:8px;line-height:9px;color:#1f5a8c;-webkit-text-stroke:0.1px #1f5a8c;white-space:nowrap">细节</div><div class="a" style="left:652.7px;top:656.1px;font-size:8px;line-height:9px;color:#1f5a8c;-webkit-text-stroke:0.1px #1f5a8c;white-space:nowrap">预览</div>
<div id="res" class="a"></div>
<div class="a" style="left:858px;top:198.5px;width:21px;height:28px;background:#fff"></div><svg class="a" style="left:0;top:0" width="882" height="720"><g fill="#333"><rect x="868.7" y="123.3" width="2" height="2" transform="rotate(0 869.7 128.3)"/><rect x="868.7" y="123.3" width="2" height="2" transform="rotate(60 869.7 128.3)"/><rect x="868.7" y="123.3" width="2" height="2" transform="rotate(120 869.7 128.3)"/><rect x="868.7" y="123.3" width="2" height="2" transform="rotate(180 869.7 128.3)"/><rect x="868.7" y="123.3" width="2" height="2" transform="rotate(240 869.7 128.3)"/><rect x="868.7" y="123.3" width="2" height="2" transform="rotate(300 869.7 128.3)"/></g><circle cx="869.7" cy="128.3" r="3.3" fill="#f2f2f2" stroke="#333" stroke-width="1.5"/><path d="M862 153l6-3 7 2v5l-3 2v6l-4 2-6-2z" fill="#cfcfcf" stroke="#444" stroke-width="0.8"/><path d="M862 153l6 2 7-3 M868 155v12" fill="none" stroke="#444" stroke-width="0.7"/><circle cx="866" cy="185" r="5" fill="#f08a1a" stroke="#6a6ab8" stroke-width="0.8"/><path d="M868 183l8 6v-6l-8 6z" fill="#fff" stroke="#222" stroke-width="0.9"/><path d="M861 216l5-8 3 1 7 7-4 2h-7z" fill="#a8a8a8" stroke="#444" stroke-width="0.8"/><path d="M865 215l3-4 2 3" fill="none" stroke="#ddd" stroke-width="0.8"/><path d="M862 242l4-6 3 1 7 7-4 2h-7z" fill="#a8a8a8" stroke="#444" stroke-width="0.8"/><path d="M872 234l3-3 M873 236l4-2" stroke="#e07a3a" stroke-width="1"/><path d="M862 265l6-4 7 3-6 4z" fill="#f4f0e8" stroke="#555" stroke-width="0.8"/><circle cx="874" cy="268" r="3" fill="#fff" stroke="#555" stroke-width="0.8"/><path d="M864 260l3-2" stroke="#e08a3a" stroke-width="1"/><circle cx="868" cy="300" r="5" fill="#9a9a9a" stroke="#777" stroke-width="0.8"/><path d="M868 298v4" stroke="#eee" stroke-width="1"/><path d="M872 294a7 7 0 0 1 1 10" fill="none" stroke="#ddd" stroke-width="1"/><rect x="861.5" y="326.5" width="13" height="13" fill="#fff" stroke="#555" stroke-width="0.8"/><circle cx="868" cy="333" r="4.5" fill="#3a8ac8" stroke="#1a5a8a" stroke-width="0.6"/><path d="M865 332l3-2 2 3" stroke="#9ad0f0" stroke-width="0.8" fill="none"/><circle cx="868" cy="366" r="6" fill="#fff" stroke="#555" stroke-width="0.9"/><path d="M868 362v4h3" fill="none" stroke="#555" stroke-width="0.8"/><rect x="862" y="387" width="3" height="12" fill="url(#rb)"/><path d="M865 390l5 9" stroke="#222" stroke-width="1.2"/><defs><linearGradient id="rb" x1="0" y1="0" x2="0" y2="1"><stop offset="0" stop-color="#e03030"/><stop offset="0.35" stop-color="#f0d020"/><stop offset="0.65" stop-color="#30c040"/><stop offset="1" stop-color="#3050e0"/></linearGradient></defs><path d="M862 424v-10 M862 424l6-2v-6 M866 418l4-5 M866 420l5 4" stroke="#3a7ad8" stroke-width="1.4" fill="none"/><rect x="861.5" y="440.5" width="13" height="13" fill="#fff" stroke="#555" stroke-width="0.8"/><path d="M863 442l10 10 M873 442l-10 10" stroke="#444" stroke-width="1.1"/></svg>
<div id="btbar" class="a"></div>
<svg class="a" style="left:0;top:0" width="882" height="720"><path d="M8 691l12-13 3.5 3-12 13z" fill="#fff" stroke="#444" stroke-width="0.9"/><path d="M12 687l1.5 1.5 M15 684l1.5 1.5 M18 681l1.5 1.5" stroke="#444" stroke-width="0.7"/><rect x="29.5" y="678.5" width="12" height="11" fill="#fff" stroke="#555" stroke-width="0.8"/><path d="M29.5 681h12" stroke="#555" stroke-width="0.6"/><path d="M32 683l1.5 2 1.5-2 M36 683l1.5 2 1.5-2" stroke="#e0904a" stroke-width="0.9" fill="none"/><path d="M37 693l6-6 1.5 1.5-6 6z" fill="#fff" stroke="#444" stroke-width="0.8"/><rect x="49.5" y="678.5" width="12" height="11" fill="#fff" stroke="#555" stroke-width="0.8"/><path d="M49.5 681h12" stroke="#555" stroke-width="0.6"/><path d="M52 683l1.5 2 1.5-2 M56 683l1.5 2 1.5-2" stroke="#e0904a" stroke-width="0.9" fill="none"/><path d="M54 693.5a5 5 0 0 1 10 0z" fill="#fff" stroke="#444" stroke-width="0.9"/><path d="M59 693l1.5-2" stroke="#444" stroke-width="0.7"/><path d="M71 684c0-4 3-6 6-6h4l4 4-4 7-6 1z" fill="#f08a1a"/><path d="M76 694a5.5 5.5 0 0 1 11 0z" fill="#fff" stroke="#222" stroke-width="0.9"/><path d="M81.5 693.5l3-4" stroke="#222" stroke-width="0.8"/><circle cx="78.5" cy="694" r="1" fill="#222"/><path d="M95 680.5h5 M97.5 678v5" stroke="#3a9ad8" stroke-width="0.9"/><circle cx="101.5" cy="689" r="4.3" fill="#fff" stroke="#444" stroke-width="0.8"/><path d="M101.5 687v4.5" stroke="#444" stroke-width="0.9"/><path d="M112 677v9l5 3" fill="none" stroke="#8ab8a8" stroke-width="0.7"/><polygon points="115,684 121,681 127,684 121,687" fill="#e8e8e8" stroke="#444" stroke-width="0.7" stroke-linejoin="round" /><polygon points="115,684 121,687 121,693 115,690" fill="#cfcfcf" stroke="#444" stroke-width="0.7" stroke-linejoin="round" /><polygon points="121,687 127,684 127,690 121,693" fill="#a0a0a0" stroke="#444" stroke-width="0.7" stroke-linejoin="round" /><path d="M132 677v9l5 3" fill="none" stroke="#8ab8a8" stroke-width="0.7"/><path d="M141 684v10 M136 689h10 M141 684l-1.5 1.5 M141 684l1.5 1.5 M141 694l-1.5-1.5 M141 694l1.5-1.5 M136 689l1.5-1.5 M136 689l1.5 1.5 M146 689l-1.5-1.5 M146 689l-1.5 1.5" stroke="#222" stroke-width="0.8" fill="none"/><path d="M156 678v9" stroke="#8ab8a8" stroke-width="0.8"/><path d="M156 687l8-5" stroke="#3ab84a" stroke-width="0.9"/><path d="M156 687l8 4" stroke="#d04a4a" stroke-width="0.9"/><circle cx="156.5" cy="687" r="1.3" fill="#d08a3a"/><path d="M181 679v7 M181 686l-6 4 M181 686l6 4" stroke="#d07090" stroke-width="0.9"/><circle cx="181" cy="686" r="3.5" fill="none" stroke="#d07090" stroke-width="0.9"/><path d="M196 677v9l6 4" fill="none" stroke="#8ab8a8" stroke-width="0.7"/><path d="M202.5 684.5h6l2 2v7.5h-8z" fill="#fff" stroke="#444" stroke-width="0.8"/><path d="M204 694v-3h5v3" fill="none" stroke="#444" stroke-width="0.7"/><path d="M216 679v8l8 5" fill="none" stroke="#8ab8a8" stroke-width="0.7"/><path d="M216 687l8 5" stroke="#d07090" stroke-width="0.8"/><rect x="220" y="677.5" width="10" height="5" fill="#fff" stroke="#444" stroke-width="0.7"/><path d="M222 680h6" stroke="#444" stroke-width="0.8" stroke-dasharray="1 0.7"/><path d="M236 689l6-3 6 3-6 3z" fill="#e4e4e4" stroke="#444" stroke-width="0.7"/><path d="M236 685l6-3 6 3-6 3z" fill="#e4e4e4" stroke="#444" stroke-width="0.7"/><path d="M236 681l6-3 6 3-6 3z" fill="#e4e4e4" stroke="#444" stroke-width="0.7"/><path d="M246 686h4l2 2v6h-6z" fill="#fff" stroke="#333" stroke-width="0.8"/><path d="M257 689l6-3 6 3-6 3z" fill="#e4e4e4" stroke="#444" stroke-width="0.7"/><path d="M257 685l6-3 6 3-6 3z" fill="#e4e4e4" stroke="#444" stroke-width="0.7"/><path d="M257 681l6-3 6 3-6 3z" fill="#e4e4e4" stroke="#444" stroke-width="0.7"/><rect x="265.5" y="686.5" width="6" height="7" fill="#fff" stroke="#333" stroke-width="0.8"/><path d="M266 692l5-5" stroke="#333" stroke-width="0.8"/><path d="M278 689l6-3 6 3-6 3z" fill="#e4e4e4" stroke="#444" stroke-width="0.7"/><path d="M278 685l6-3 6 3-6 3z" fill="#e4e4e4" stroke="#444" stroke-width="0.7"/><path d="M278 681l6-3 6 3-6 3z" fill="#e4e4e4" stroke="#444" stroke-width="0.7"/><circle cx="290" cy="690.5" r="3.2" fill="#fff" stroke="#333" stroke-width="1.3" stroke-dasharray="1.2 0.8"/><path d="M306 678l7 4v8l-7 4-7-4v-8z M299 682l7 4 7-4 M306 686v8 M302.5 680l7 4 M309.5 680l-7 4" fill="#f4e8d8" stroke="#c89a6a" stroke-width="0.8"/><polygon points="320,682.5 327,679 334,682.5 327,686" fill="#f4e8e8" stroke="#666" stroke-width="0.7" stroke-linejoin="round" /><polygon points="320,682.5 327,686 327,693 320,689.5" fill="#e8e8e8" stroke="#666" stroke-width="0.7" stroke-linejoin="round" /><polygon points="327,686 334,682.5 334,689.5 327,693" fill="#d0d0d0" stroke="#666" stroke-width="0.7" stroke-linejoin="round" /><path d="M321 688l6 3 6-3" stroke="#3ab89a" stroke-width="1" fill="none"/><rect x="340" y="679" width="14" height="14" fill="#fff" stroke="#8a9ab0" stroke-width="1"/><rect x="343.5" y="682.5" width="7" height="7" fill="#f08a1a"/><polygon points="361,682 367,679 373,682 367,685" fill="#f08a1a" stroke="#555" stroke-width="0.7" stroke-linejoin="round" /><polygon points="361,682 367,685 367,691 361,688" fill="#f6f0ea" stroke="#555" stroke-width="0.7" stroke-linejoin="round" /><polygon points="367,685 373,682 373,688 367,691" fill="#e0d8d0" stroke="#555" stroke-width="0.7" stroke-linejoin="round" /><rect x="369.5" y="686" width="6.5" height="7.5" fill="#fff" stroke="#444" stroke-width="0.8"/><path d="M381 683l8-5 8 3-8 5z" fill="#f08a1a" stroke="#9a5a1a" stroke-width="0.6"/><path d="M382 688l7 4 7-3" fill="none" stroke="#777" stroke-width="1"/><path d="M381 686l8 4 8-3" fill="#f6b060" stroke="#9a5a1a" stroke-width="0.5"/><path d="M403 683l5-4 10 5-5 7z" fill="#f08a1a" stroke="#8a5a2a" stroke-width="0.6"/><path d="M406 683l3-2 6 3-3 4z" fill="#cfe0ea"/><path d="M424 690c1-5 4-9 8-11l5 2c-3 3-5 7-6 11z" fill="#f08a1a" stroke="#8a9ab8" stroke-width="0.8"/><path d="M445 684l6-5 8 6-5 5z" fill="#f08a1a" stroke="#6a4a2a" stroke-width="0.6"/><path d="M446 684l8 6" stroke="#f6d0a0" stroke-width="1"/><path d="M464 690c3-6 8-10 14-11c-1 5-4 10-9 13z" fill="#9aaab0" stroke="#555" stroke-width="0.7"/><path d="M468 691h8l-2 3h-7z" fill="#bfe8e0" stroke="#6a9a9a" stroke-width="0.5"/><rect x="485.5" y="678" width="11" height="11" fill="#f08a1a" stroke="#b86a1a" stroke-width="0.6"/><path d="M496 685v9 M491.5 689.5h9" stroke="#222" stroke-width="0.9"/><path d="M494.5 686.5l1.5-1.5 1.5 1.5 M494.5 692.5l1.5 1.5 1.5-1.5 M492.5 688l-1.5 1.5 1.5 1.5 M499.5 688l1.5 1.5-1.5 1.5" stroke="#222" stroke-width="0.7" fill="none"/><path d="M513 677v4" stroke="#3a70c8" stroke-width="0.9"/><path d="M506 690h4 M517 690l4 1" stroke="#d04a4a" stroke-width="0.8"/><polygon points="508,683.5 513,681 518,683.5 513,686" fill="#8ab8f0" stroke="#3a5aa0" stroke-width="0.7" stroke-linejoin="round" /><polygon points="508,683.5 513,686 513,691 508,688.5" fill="#5a90e0" stroke="#3a5aa0" stroke-width="0.7" stroke-linejoin="round" /><polygon points="513,686 518,683.5 518,688.5 513,691" fill="#3a6ac0" stroke="#3a5aa0" stroke-width="0.7" stroke-linejoin="round" /><path d="M528 682l5-3 6 3-5 4z" fill="#f0e8e0" stroke="#555" stroke-width="0.7" stroke-dasharray="1.2 0.6"/><path d="M531 687l5-3 6 3-5 4z" fill="#f4f0ea" stroke="#555" stroke-width="0.7" stroke-dasharray="1.2 0.6"/><circle cx="533" cy="693" r="1.4" fill="none" stroke="#333" stroke-width="0.7"/><circle cx="537" cy="693" r="1.4" fill="none" stroke="#333" stroke-width="0.7"/><circle cx="541" cy="693" r="1.4" fill="none" stroke="#333" stroke-width="0.7"/><polygon points="547,681.2 553.5,678 560,681.2 553.5,684.5" fill="#f08a1a" stroke="#555" stroke-width="0.7" stroke-linejoin="round" /><polygon points="547,681.2 553.5,684.5 553.5,691 547,687.8" fill="#f6f0ea" stroke="#555" stroke-width="0.7" stroke-linejoin="round" /><polygon points="553.5,684.5 560,681.2 560,687.8 553.5,691" fill="#e0d8d0" stroke="#555" stroke-width="0.7" stroke-linejoin="round" /><rect x="556.5" y="686" width="7" height="8" fill="#fff" stroke="#444" stroke-width="0.8"/><path d="M568 680l8 4 8-4v10l-8 4-8-4z" fill="#dcdcdc" stroke="#555" stroke-width="0.7"/><path d="M576 684v10" stroke="#555" stroke-width="0.7"/><path d="M576 684l8-4v10l-8 4z" fill="#c8b0a0"/><path d="M589 682c6-1 11 2 14 10l-3 2c-3-6-7-8-11-9z" fill="#f4dcc0" stroke="#8a6a4a" stroke-width="0.7"/><path d="M590 680c5-1 10 0 14 5" fill="none" stroke="#3ab0b0" stroke-width="1"/><path d="M617 678v16" stroke="#555" stroke-width="0.6"/><path d="M616 680l-4 13h4z" fill="#1a2a6a"/><path d="M618 680l4 13h-4z" fill="#a02a2a"/><path d="M631 692l3-5 9-7 2.5 2.5-7 9z" fill="#b0c8f0" stroke="#5a70c0" stroke-width="0.8"/><path d="M636 688l4-3 2 2-3 3z" fill="#fff" stroke="#5a70c0" stroke-width="0.5"/><polygon points="652,677.5 657,675 662,677.5 657,680" fill="#c8a080" stroke="#555" stroke-width="0.5" stroke-linejoin="round" /><polygon points="652,677.5 657,680 657,685 652,682.5" fill="#c8a080" stroke="#555" stroke-width="0.5" stroke-linejoin="round" /><polygon points="657,680 662,677.5 662,682.5 657,685" fill="#888" stroke="#555" stroke-width="0.5" stroke-linejoin="round" /><polygon points="652,690.5 657,688 662,690.5 657,693" fill="#f0a040" stroke="#666" stroke-width="0.5" stroke-linejoin="round" /><polygon points="652,690.5 657,693 657,698 652,695.5" fill="#f0a040" stroke="#666" stroke-width="0.5" stroke-linejoin="round" /><polygon points="657,693 662,690.5 662,695.5 657,698" fill="#999" stroke="#666" stroke-width="0.5" stroke-linejoin="round" /><polygon points="667.6,677.5 672.6,675 677.6,677.5 672.6,680" fill="#e0b080" stroke="#555" stroke-width="0.5" stroke-linejoin="round" /><polygon points="667.6,677.5 672.6,680 672.6,685 667.6,682.5" fill="#e0b080" stroke="#555" stroke-width="0.5" stroke-linejoin="round" /><polygon points="672.6,680 677.6,677.5 677.6,682.5 672.6,685" fill="#888" stroke="#555" stroke-width="0.5" stroke-linejoin="round" /><polygon points="667.6,690.5 672.6,688 677.6,690.5 672.6,693" fill="#b8d8e8" stroke="#666" stroke-width="0.5" stroke-linejoin="round" /><polygon points="667.6,690.5 672.6,693 672.6,698 667.6,695.5" fill="#b8d8e8" stroke="#666" stroke-width="0.5" stroke-linejoin="round" /><polygon points="672.6,693 677.6,690.5 677.6,695.5 672.6,698" fill="#999" stroke="#666" stroke-width="0.5" stroke-linejoin="round" /><polygon points="683,677.5 688,675 693,677.5 688,680" fill="#c8dce8" stroke="#555" stroke-width="0.5" stroke-linejoin="round" /><polygon points="683,677.5 688,680 688,685 683,682.5" fill="#c8dce8" stroke="#555" stroke-width="0.5" stroke-linejoin="round" /><polygon points="688,680 693,677.5 693,682.5 688,685" fill="#888" stroke="#555" stroke-width="0.5" stroke-linejoin="round" /><polygon points="683,690.5 688,688 693,690.5 688,693" fill="#6aaac8" stroke="#666" stroke-width="0.5" stroke-linejoin="round" /><polygon points="683,690.5 688,693 688,698 683,695.5" fill="#6aaac8" stroke="#666" stroke-width="0.5" stroke-linejoin="round" /><polygon points="688,693 693,690.5 693,695.5 688,698" fill="#999" stroke="#666" stroke-width="0.5" stroke-linejoin="round" /><polygon points="699,677.5 704,675 709,677.5 704,680" fill="#f08a1a" stroke="#555" stroke-width="0.5" stroke-linejoin="round" /><polygon points="699,677.5 704,680 704,685 699,682.5" fill="#f08a1a" stroke="#555" stroke-width="0.5" stroke-linejoin="round" /><polygon points="704,680 709,677.5 709,682.5 704,685" fill="#888" stroke="#555" stroke-width="0.5" stroke-linejoin="round" /><polygon points="699,690.5 704,688 709,690.5 704,693" fill="#d8a070" stroke="#666" stroke-width="0.5" stroke-linejoin="round" /><polygon points="699,690.5 704,693 704,698 699,695.5" fill="#d8a070" stroke="#666" stroke-width="0.5" stroke-linejoin="round" /><polygon points="704,693 709,690.5 709,695.5 704,698" fill="#999" stroke="#666" stroke-width="0.5" stroke-linejoin="round" /><polygon points="714.5,677.5 719.5,675 724.5,677.5 719.5,680" fill="#d8a070" stroke="#555" stroke-width="0.5" stroke-linejoin="round" /><polygon points="714.5,677.5 719.5,680 719.5,685 714.5,682.5" fill="#d8a070" stroke="#555" stroke-width="0.5" stroke-linejoin="round" /><polygon points="719.5,680 724.5,677.5 724.5,682.5 719.5,685" fill="#888" stroke="#555" stroke-width="0.5" stroke-linejoin="round" /><polygon points="714.5,690.5 719.5,688 724.5,690.5 719.5,693" fill="#ccc" stroke="#666" stroke-width="0.5" stroke-linejoin="round" /><polygon points="714.5,690.5 719.5,693 719.5,698 714.5,695.5" fill="#ccc" stroke="#666" stroke-width="0.5" stroke-linejoin="round" /><polygon points="719.5,693 724.5,690.5 724.5,695.5 719.5,698" fill="#999" stroke="#666" stroke-width="0.5" stroke-linejoin="round" /><polygon points="730,677.5 735,675 740,677.5 735,680" fill="#bfe0f0" stroke="#555" stroke-width="0.5" stroke-linejoin="round" /><polygon points="730,677.5 735,680 735,685 730,682.5" fill="#bfe0f0" stroke="#555" stroke-width="0.5" stroke-linejoin="round" /><polygon points="735,680 740,677.5 740,682.5 735,685" fill="#888" stroke="#555" stroke-width="0.5" stroke-linejoin="round" /><polygon points="730,690.5 735,688 740,690.5 735,693" fill="#8ad8e8" stroke="#666" stroke-width="0.5" stroke-linejoin="round" /><polygon points="730,690.5 735,693 735,698 730,695.5" fill="#8ad8e8" stroke="#666" stroke-width="0.5" stroke-linejoin="round" /><polygon points="735,693 740,690.5 740,695.5 735,698" fill="#999" stroke="#666" stroke-width="0.5" stroke-linejoin="round" /><polygon points="745.7,677.5 750.7,675 755.7,677.5 750.7,680" fill="#a8c8a8" stroke="#555" stroke-width="0.5" stroke-linejoin="round" /><polygon points="745.7,677.5 750.7,680 750.7,685 745.7,682.5" fill="#a8c8a8" stroke="#555" stroke-width="0.5" stroke-linejoin="round" /><polygon points="750.7,680 755.7,677.5 755.7,682.5 750.7,685" fill="#888" stroke="#555" stroke-width="0.5" stroke-linejoin="round" /><polygon points="745.7,690.5 750.7,688 755.7,690.5 750.7,693" fill="#8a9ae0" stroke="#666" stroke-width="0.5" stroke-linejoin="round" /><polygon points="745.7,690.5 750.7,693 750.7,698 745.7,695.5" fill="#8a9ae0" stroke="#666" stroke-width="0.5" stroke-linejoin="round" /><polygon points="750.7,693 755.7,690.5 755.7,695.5 750.7,698" fill="#999" stroke="#666" stroke-width="0.5" stroke-linejoin="round" /><polygon points="761,677.5 766,675 771,677.5 766,680" fill="#f08a1a" stroke="#555" stroke-width="0.5" stroke-linejoin="round" /><polygon points="761,677.5 766,680 766,685 761,682.5" fill="#f08a1a" stroke="#555" stroke-width="0.5" stroke-linejoin="round" /><polygon points="766,680 771,677.5 771,682.5 766,685" fill="#888" stroke="#555" stroke-width="0.5" stroke-linejoin="round" /><polygon points="761,690.5 766,688 771,690.5 766,693" fill="#e8d8c8" stroke="#666" stroke-width="0.5" stroke-linejoin="round" /><polygon points="761,690.5 766,693 766,698 761,695.5" fill="#e8d8c8" stroke="#666" stroke-width="0.5" stroke-linejoin="round" /><polygon points="766,693 771,690.5 771,695.5 766,698" fill="#999" stroke="#666" stroke-width="0.5" stroke-linejoin="round" /><polygon points="777,677.5 782,675 787,677.5 782,680" fill="#f0a040" stroke="#555" stroke-width="0.5" stroke-linejoin="round" /><polygon points="777,677.5 782,680 782,685 777,682.5" fill="#f0a040" stroke="#555" stroke-width="0.5" stroke-linejoin="round" /><polygon points="782,680 787,677.5 787,682.5 782,685" fill="#888" stroke="#555" stroke-width="0.5" stroke-linejoin="round" /><polygon points="777,690.5 782,688 787,690.5 782,693" fill="#f08a1a" stroke="#666" stroke-width="0.5" stroke-linejoin="round" /><polygon points="777,690.5 782,693 782,698 777,695.5" fill="#f08a1a" stroke="#666" stroke-width="0.5" stroke-linejoin="round" /><polygon points="782,693 787,690.5 787,695.5 782,698" fill="#999" stroke="#666" stroke-width="0.5" stroke-linejoin="round" /><polygon points="792.7,677.5 797.7,675 802.7,677.5 797.7,680" fill="#d89060" stroke="#555" stroke-width="0.5" stroke-linejoin="round" /><polygon points="792.7,677.5 797.7,680 797.7,685 792.7,682.5" fill="#d89060" stroke="#555" stroke-width="0.5" stroke-linejoin="round" /><polygon points="797.7,680 802.7,677.5 802.7,682.5 797.7,685" fill="#888" stroke="#555" stroke-width="0.5" stroke-linejoin="round" /><polygon points="792.7,690.5 797.7,688 802.7,690.5 797.7,693" fill="#f0a020" stroke="#666" stroke-width="0.5" stroke-linejoin="round" /><polygon points="792.7,690.5 797.7,693 797.7,698 792.7,695.5" fill="#f0a020" stroke="#666" stroke-width="0.5" stroke-linejoin="round" /><polygon points="797.7,693 802.7,690.5 802.7,695.5 797.7,698" fill="#999" stroke="#666" stroke-width="0.5" stroke-linejoin="round" /><polygon points="808,677.5 813,675 818,677.5 813,680" fill="#c8a0d8" stroke="#555" stroke-width="0.5" stroke-linejoin="round" /><polygon points="808,677.5 813,680 813,685 808,682.5" fill="#c8a0d8" stroke="#555" stroke-width="0.5" stroke-linejoin="round" /><polygon points="813,680 818,677.5 818,682.5 813,685" fill="#888" stroke="#555" stroke-width="0.5" stroke-linejoin="round" /><rect x="808.5" y="688.5" width="9" height="9" fill="#fff" stroke="#d02a5a" stroke-width="1"/><path d="M810.5 695v-4 M812 693c1-2 3-2 3 0" stroke="#d02a5a" stroke-width="0.8" fill="none"/><rect x="825" y="675.5" width="8" height="8.5" rx="1" fill="#fff" stroke="#555" stroke-width="0.8"/><polygon points="824,690.5 829,688 834,690.5 829,693" fill="#bbb" stroke="#666" stroke-width="0.5" stroke-linejoin="round" /><polygon points="824,690.5 829,693 829,698 824,695.5" fill="#bbb" stroke="#666" stroke-width="0.5" stroke-linejoin="round" /><polygon points="829,693 834,690.5 834,695.5 829,698" fill="#999" stroke="#666" stroke-width="0.5" stroke-linejoin="round" /><path d="M838 676h8v7c-2 2-6 2-8 0z" fill="#eee" stroke="#333" stroke-width="0.8"/><path d="M857.5 673v27" stroke="#e6e6e6" stroke-width="1"/><path d="M872.5 694.6 h3 l-1.5 1.8 z" fill="#333"/></svg>
<div id="status" class="a"></div>
<div class="a" style="left:4px;top:703.8px;font-size:6.8px;line-height:10px;color:#222;-webkit-text-stroke:0.25px #222;white-space:nowrap">拖动光标以绕 X-Y 旋转视图</div><div class="a" style="left:424.5px;top:703.8px;font-size:6.8px;line-height:10px;color:#222;-webkit-text-stroke:0.25px #222;white-space:nowrap">绕 X-Y 旋转视图</div>
</body></html>
